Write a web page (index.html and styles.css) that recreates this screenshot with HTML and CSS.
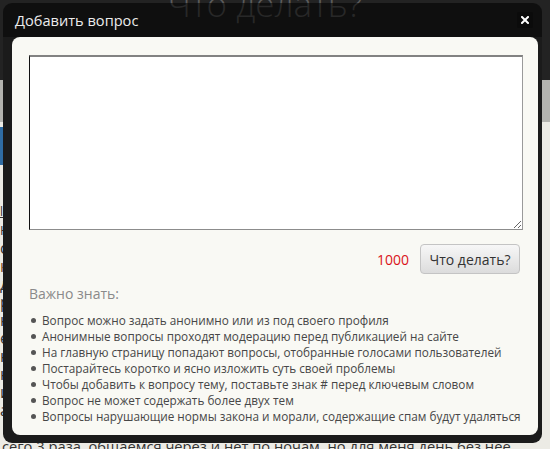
FILE: index.html
```html
<!DOCTYPE html>
<html lang="ru">
<head>
<meta charset="utf-8">
<title>Добавить вопрос</title>
<link rel="stylesheet" href="styles.css">
</head>
<body>
<div class="page">
  <header class="site-header">
    <h1 class="site-title">Что делать?</h1>
  </header>
  <div class="site-bar"></div>
  <div class="site-nav"><span class="nav-btn"></span></div>
  <main class="site-main">
    <div class="post-lines">
      <a class="post-link" href="#">ls</a>
      <span class="post-meta">Ю,</span>
      <span>си</span>
      <span class="accent">ка</span>
      <span>да</span>
      <span>ра</span>
      <span>ни</span>
      <span>е</span>
      <span>на</span>
      <span>не</span>
      <span>и</span>
      <span>а</span>
    </div>
    <p class="post-tail">сего 3 раза, общаемся через и нет по ночам, но для меня день без нее</p>
  </main>
</div>

<div class="dialog" role="dialog" aria-labelledby="dlg-title">
  <div class="dialog-titlebar">
    <span class="dialog-title" id="dlg-title">Добавить вопрос</span>
    <button class="dialog-close" type="button" aria-label="Закрыть">
      <svg width="8" height="8" viewBox="0 0 8 8"><path d="M1 1L7 7M7 1L1 7" stroke="#fff" stroke-width="2" stroke-linecap="square"/></svg>
    </button>
  </div>
  <div class="dialog-frame">
    <div class="dialog-content">
      <textarea class="question-input" aria-label="Вопрос"></textarea>
      <div class="question-actions">
        <span class="char-count">1000</span>
        <button class="submit-btn" type="button">Что делать?</button>
      </div>
      <h3 class="notes-title">Важно знать:</h3>
      <ul class="notes-list">
        <li>Вопрос можно задать анонимно или из под своего профиля</li>
        <li>Анонимные вопросы проходят модерацию перед публикацией на сайте</li>
        <li>На главную страницу попадают вопросы, отобранные голосами пользователей</li>
        <li>Постарайтесь коротко и ясно изложить суть своей проблемы</li>
        <li>Чтобы добавить к вопросу тему, поставьте знак # перед ключевым словом</li>
        <li>Вопрос не может содержать более двух тем</li>
        <li>Вопросы нарушающие нормы закона и морали, содержащие спам будут удаляться</li>
      </ul>
    </div>
  </div>
</div>
</body>
</html>
```
FILE: styles.css
```css
* { box-sizing: border-box; }

html, body {
  margin: 0;
  padding: 0;
}

body {
  width: 550px;
  height: 449px;
  overflow: hidden;
  background: #ecebe5;
  font-family: "Open Sans", "DejaVu Sans", sans-serif;
  position: relative;
}

/* ---------- page behind the dialog ---------- */
.site-header {
  height: 80px;
  background: #232323;
  overflow: hidden;
}

.site-title {
  margin: -13px 0 0;
  padding-right: 20px;
  text-align: center;
  font-size: 35px;
  line-height: 34px;
  font-weight: 300;
  color: #5c5c5c;
}

.site-bar {
  height: 42px;
  background: #b4b4b0;
}

.site-nav {
  height: 48px;
  padding-top: 5px;
}

.nav-btn {
  display: block;
  width: 14px;
  height: 38px;
  background: #2f6ca3;
  border-radius: 0 8px 8px 0;
}

.site-main {
  padding: 33px 0 0 0;
  color: #333;
  font-size: 16px;
  line-height: 18px;
}

.post-lines {
  width: 24px;
  display: flex;
  flex-direction: column;
}

.post-link {
  color: #333;
  font-size: 12px;
}

.post-meta { font-size: 13px; }

.accent { color: #7a4a1e; }

.post-tail {
  margin: 18px 0 0;
  padding-left: 2px;
  font-size: 14.7px;
  white-space: nowrap;
}

/* ---------- dialog ---------- */
.dialog {
  position: absolute;
  left: 3px;
  top: 3px;
  width: 539px;
}

.dialog-titlebar {
  height: 34px;
  display: flex;
  align-items: center;
  justify-content: space-between;
  padding: 0 9px 0 12px;
  background: rgba(0, 0, 0, 0.56);
  border-radius: 9px 9px 0 0;
}

.dialog-title {
  color: #ececec;
  font-size: 14.6px;
  line-height: 20px;
  padding-bottom: 1px;
}

.dialog-close {
  width: 16px;
  height: 16px;
  padding: 0;
  border: 0;
  border-radius: 2px;
  background: #0b0b0b;
  display: flex;
  align-items: center;
  justify-content: center;
}

.dialog-frame {
  background: #1b1b1b;
  padding: 0 4px 8px 9px;
  border-radius: 0 0 9px 9px;
}

.dialog-content {
  background: #f9f9f4;
  border-radius: 8px;
  padding: 18px 15px 11px 17px;
}

.question-input {
  display: block;
  width: 494px;
  height: 175px;
  margin: 0;
  background: #fff;
  border-style: solid;
  border-width: 2px 1px 1px 1px;
  border-color: #828282 #9a9a9a #8c8c8c #111;
  font-family: "Open Sans", sans-serif;
  font-size: 13px;
}

.question-actions {
  margin-top: 14px;
  margin-right: 3px;
  display: flex;
  justify-content: flex-end;
  align-items: center;
  gap: 11px;
}

.char-count {
  color: #d9141b;
  font-size: 14px;
}

.submit-btn {
  width: 100px;
  height: 30px;
  padding: 0;
  font-family: "Open Sans", sans-serif;
  font-size: 14px;
  color: #333;
  border: 1px solid #c4c4c4;
  border-radius: 4px;
  background: linear-gradient(#f7f7f7, #dcdcdc);
}

.notes-title {
  margin: 10px 0 0;
  font-size: 14px;
  line-height: 20px;
  font-weight: normal;
  color: #8a8a8a;
}

.notes-list {
  margin: 8px 0 0;
  padding: 0;
  list-style: none;
  font-size: 11.75px;
  line-height: 16px;
  color: #474747;
}

.notes-list li {
  display: flex;
  align-items: center;
  white-space: nowrap;
}

.notes-list li::before {
  content: "";
  flex: none;
  width: 5px;
  height: 5px;
  margin: 0 6px 0 2px;
  border-radius: 50%;
  background: #555;
}
```
